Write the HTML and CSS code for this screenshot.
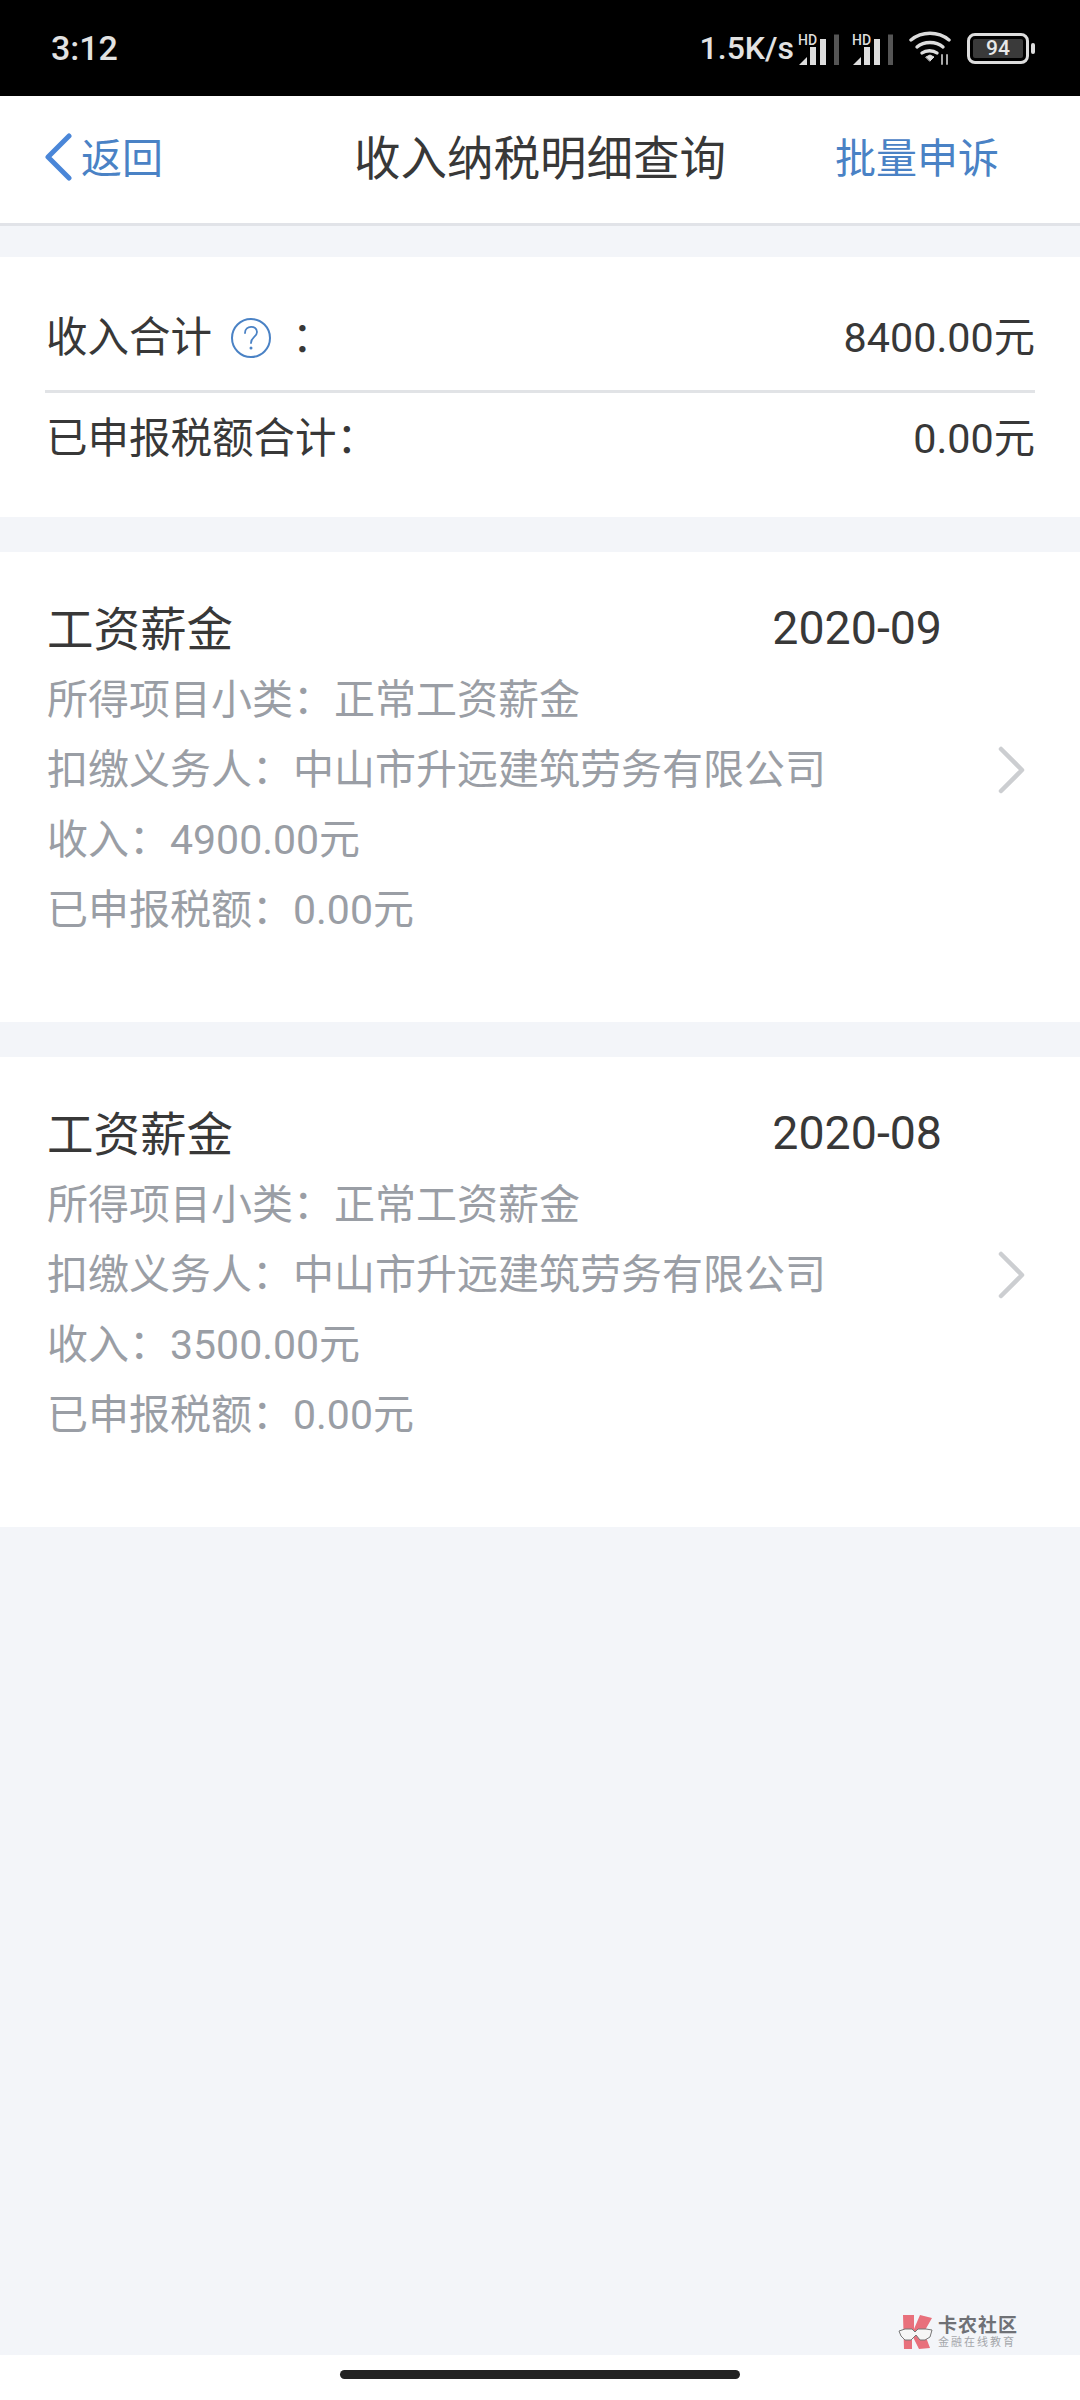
FILE: index.html
```html
<!DOCTYPE html>
<html lang="zh-CN">
<head>
  <meta charset="UTF-8">
  <meta name="viewport" content="width=device-width, initial-scale=1.0">
  <title>收入纳税明细查询</title>
  <link rel="stylesheet" href="styles.css">
</head>
<body>
  <div class="phone">
    <div class="status-bar">
      <span class="time">3:12</span>
      <div class="status-right">
        <span class="speed">1.5K/s</span>
        <svg class="signal" width="41" height="35" viewBox="0 0 41 35">
          <text x="0" y="13.500" class="hd">HD</text>
          <path d="M1 34l8-8v8z" fill="#ddd"/>
          <rect x="12" y="16" width="6" height="18" fill="#ddd"/>
          <rect x="22" y="8" width="6" height="26" fill="#ddd"/>
          <rect x="36" y="3.500" width="5" height="30.500" fill="#555"/>
        </svg>
        <svg class="signal" width="41" height="35" viewBox="0 0 41 35">
          <text x="0" y="13.500" class="hd">HD</text>
          <path d="M1 34l8-8v8z" fill="#ddd"/>
          <rect x="12" y="16" width="6" height="18" fill="#ddd"/>
          <rect x="22" y="8" width="6" height="26" fill="#ddd"/>
          <rect x="36" y="3.500" width="5" height="30.500" fill="#555"/>
        </svg>
        <svg class="wifi" width="42" height="34" viewBox="0 0 42 34" fill="none" stroke="#ddd" stroke-width="3.400" stroke-linecap="round">
          <path d="M2 9c11-9 27-9 38 0"/>
          <path d="M8 16c7-6 19-6 26 0"/>
          <path d="M13 22c4-3 11-3 15 0"/>
          <path d="M17 26l4-2 4 2-4 4z" fill="#ddd" stroke-width="1"/>
          <path d="M33 33v-9M38 33v-9" stroke="#aaa" stroke-width="2"/>
        </svg>
        <div class="battery">
          <span class="battery-level">94</span>
        </div>
        <span class="battery-tip"></span>
      </div>
    </div>

    <header class="nav-bar">
      <div class="nav-back">
        <svg width="28" height="48" viewBox="0 0 28 48" fill="none" stroke="#4a86d8" stroke-width="5" stroke-linecap="round" stroke-linejoin="round">
          <path d="M25 3L4 24l21 21"/>
        </svg>
        <span>返回</span>
      </div>
      <h1 class="nav-title">收入纳税明细查询</h1>
      <span class="nav-action">批量申诉</span>
    </header>

    <section class="summary">
      <div class="summary-row first">
        <div class="summary-label">
          <span>收入合计</span>
          <svg class="help" width="42" height="42" viewBox="0 0 42 42" fill="none">
            <circle cx="21" cy="21" r="19" stroke="#4a82c5" stroke-width="2"/>
            <path d="M15 16c0-8 12-8 12-1 0 5-6 5-6 11" stroke="#4a82c5" stroke-width="1.800" stroke-linecap="round"/>
            <circle cx="21" cy="31" r="1.500" fill="#4a82c5"/>
          </svg>
          <span class="help-colon">&#65306;</span>
        </div>
        <span class="amount">8400.00元</span>
      </div>
      <div class="summary-row second">
        <span class="summary-label">已申报税额合计&#65306;</span>
        <span class="amount">0.00元</span>
      </div>
    </section>

    <section class="income-card">
      <div class="card-head">
        <span class="card-title">工资薪金</span>
        <span class="card-date">2020-09</span>
      </div>
      <p class="card-line">所得项目小类&#65306;正常工资薪金</p>
      <p class="card-line">扣缴义务人&#65306;中山市升远建筑劳务有限公司</p>
      <p class="card-line">收入&#65306;4900.00元</p>
      <p class="card-line">已申报税额&#65306;0.00元</p>
      <svg class="chevron" width="28" height="48" viewBox="0 0 28 48" fill="none" stroke="#ccced1" stroke-width="4.500" stroke-linecap="round" stroke-linejoin="round">
        <path d="M3 3l21 21L3 45"/>
      </svg>
    </section>

    <section class="income-card">
      <div class="card-head">
        <span class="card-title">工资薪金</span>
        <span class="card-date">2020-08</span>
      </div>
      <p class="card-line">所得项目小类&#65306;正常工资薪金</p>
      <p class="card-line">扣缴义务人&#65306;中山市升远建筑劳务有限公司</p>
      <p class="card-line">收入&#65306;3500.00元</p>
      <p class="card-line">已申报税额&#65306;0.00元</p>
      <svg class="chevron" width="28" height="48" viewBox="0 0 28 48" fill="none" stroke="#ccced1" stroke-width="4.500" stroke-linecap="round" stroke-linejoin="round">
        <path d="M3 3l21 21L3 45"/>
      </svg>
    </section>

    <div class="spacer">
      <div class="watermark">
        <svg width="36" height="36" viewBox="0 0 36 36">
          <path d="M5 1h11v14l6-14 12 3-8 14 6 16-11 1-7-14v14H6z" fill="#e8707c"/>
          <path d="M1 17l6-2h7l3 3 3-3h8l6 1-2 7-5 3h-5l-4-5-5 5H7l-4-4z" fill="#f6f6f6" stroke="#777" stroke-width="1"/>
        </svg>
        <div class="watermark-text">
          <span class="watermark-name">卡农社区</span>
          <span class="watermark-sub">金融在线教育</span>
        </div>
      </div>
    </div>

    <div class="home-bar">
      <span class="home-pill"></span>
    </div>
  </div>
</body>
</html>
```

FILE: styles.css
```css
* {
  box-sizing: border-box;
}

body {
  margin: 0;
  background: #f3f5f9;
  font-family: Roboto, "Noto Sans CJK SC", sans-serif;
  color: #383838;
}

.phone {
  width: 1080px;
  height: 2400px;
  display: flex;
  flex-direction: column;
}

/* Status bar */
.status-bar {
  height: 96px;
  flex: none;
  background: #000;
  color: #e2e2e2;
  display: flex;
  justify-content: space-between;
  align-items: center;
  padding: 0 45px 0 51px;
}

.time {
  font-size: 34px;
  font-weight: 500;
}

.status-right {
  display: flex;
  align-items: center;
}

.speed {
  font-size: 32px;
  font-weight: 500;
  margin-right: 4px;
}

.signal {
  margin-right: 13px;
}

.hd {
  font-size: 14px;
  font-weight: 500;
  fill: #ddd;
}

.wifi {
  margin: 0 16px 0 3px;
}

.battery {
  width: 62px;
  height: 31px;
  border: 3px solid #ddd;
  border-radius: 8px;
  padding: 3px;
  display: flex;
}

.battery-level {
  flex: 1;
  background: #3a3a3a;
  border-radius: 2px;
  color: #e8e8e8;
  font-size: 21px;
  font-weight: 500;
  line-height: 19px;
  text-align: center;
}

.battery-tip {
  width: 4px;
  height: 11px;
  margin-left: 2px;
  background: #ddd;
  border-radius: 2px;
}

/* Navigation */
.nav-bar {
  height: 130px;
  flex: none;
  background: #fff;
  border-bottom: 3px solid #e1e3e8;
  display: grid;
  grid-template-columns: 1fr auto 1fr;
  align-items: center;
  padding: 0 44px 10px;
}

.nav-back {
  display: flex;
  align-items: center;
  gap: 9px;
  color: #4a82c5;
  font-size: 41px;
}

.nav-back svg {
  margin-top: 4px;
}

.nav-title {
  margin: 0;
  font-size: 46.500px;
  font-weight: 400;
  color: #383838;
}

.nav-action {
  justify-self: end;
  margin-right: 37px;
  font-size: 41px;
  color: #4a82c5;
}

/* Totals */
.summary {
  flex: none;
  background: #fff;
  margin-top: 31px;
  padding: 0 45px;
  height: 260px;
}

.summary-row {
  display: flex;
  justify-content: space-between;
  align-items: center;
  font-size: 41.500px;
  line-height: 68px;
}

.summary-row.first {
  height: 136px;
  padding: 47px 0 18px;
  border-bottom: 3px solid #e1e3e6;
}

.summary-row.second {
  padding: 12px 0 0;
}

.summary-label {
  display: flex;
  align-items: center;
  padding-left: 1px;
}

.help {
  margin: 0 0 0 18px;
}

.help-colon {
  margin-left: 20px;
}

.amount {
  font-size: 41.300px;
}

/* Income records */
.income-card {
  position: relative;
  flex: none;
  height: 470px;
  background: #fff;
  margin-top: 35px;
  padding: 38px 45px 0 47px;
}

.card-head {
  display: flex;
  justify-content: space-between;
  align-items: center;
  height: 75px;
  padding-right: 93px;
}

.card-title {
  font-size: 46.500px;
  padding-bottom: 5px;
}

.card-date {
  font-size: 46.500px;
}

.card-line {
  margin: 0;
  font-size: 41px;
  line-height: 70px;
  color: #9a9ea5;
}

.chevron {
  position: absolute;
  right: 54px;
  top: 194px;
}

/* Bottom */
.spacer {
  flex: 1;
  display: flex;
  justify-content: flex-end;
  align-items: flex-end;
  padding: 0 62px 5px 0;
}

.watermark {
  display: flex;
  align-items: center;
  gap: 4px;
}

.watermark-text {
  display: flex;
  flex-direction: column;
  line-height: 1;
}

.watermark-name {
  font-size: 19px;
  font-weight: 700;
  color: #6f7176;
  letter-spacing: 1px;
}

.watermark-sub {
  font-size: 11px;
  color: #a5a7ab;
  letter-spacing: 2px;
  margin-top: 2px;
}

.home-bar {
  height: 45px;
  flex: none;
  background: #fff;
  display: flex;
  justify-content: center;
  padding-top: 15px;
}

.home-pill {
  width: 400px;
  height: 9px;
  background: #222;
  border-radius: 5px;
}
```
